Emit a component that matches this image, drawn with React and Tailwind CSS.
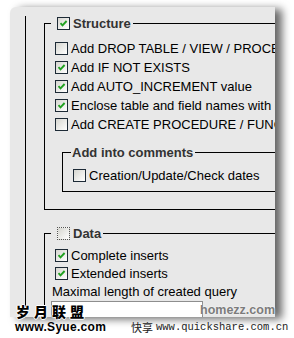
import React from 'react';

const font = { fontFamily: '"Liberation Sans", Arial, sans-serif' };

function Box({ checked, dotted }) {
    return (
        <span
            className={`relative inline-block w-[13px] h-[13px] shrink-0 border ${dotted ? 'border-dotted border-[#555]' : 'border-[#1d2a36]'} bg-linear-to-br from-[#d6d6d0] to-white`}
        >
            {checked && (
                <svg className="absolute left-0 top-0" width="11" height="11" viewBox="0 0 11 11">
                    <path d="M2.5 5.2 L4.5 7.3 L8.6 3" fill="none" stroke="#21a121" strokeWidth="1.9" />
                </svg>
            )}
        </span>
    );
}

function Row({ checked, children, h = 'h-[19px]' }) {
    return (
        <div className={`flex items-center ${h} whitespace-nowrap`}>
            <span className="ml-[4px] flex"><Box checked={checked} /></span>
            <span className="ml-[3px] leading-none">{children}</span>
        </div>
    );
}

export default function App() {
    return (
        <div className="relative w-[294px] h-[338px] bg-white overflow-hidden text-[13px] text-black" style={font}>
            <div className="pt-[7px] pl-[10px]">
                {/* grey panel */}
                <div className="relative w-[265px] h-[310px] bg-[#e8e8e8] overflow-hidden rounded-tl-[6px] shadow-[7px_2px_9px_rgba(0,0,0,0.6)]">
                    <div className="ml-[15px] mt-[3px] w-[300px] h-[306px] border-l border-black">
                        {/* Structure */}
                        <fieldset className="ml-[18px] mt-[9px] w-[262px] min-w-0 border border-black">
                            <legend className="ml-[6px] flex items-center h-[14px] pr-[2px]">
                                <span className="ml-[6px] flex"><Box checked /></span>
                                <span className="ml-[3px] font-bold text-[#333] leading-none">Structure</span>
                            </legend>
                            <div className="pl-[6px] pt-[9px] pb-[17px]">
                                <Row>Add DROP TABLE / VIEW / PROCEDURE / FUNCTION / EVENT</Row>
                                <Row checked>Add IF NOT EXISTS</Row>
                                <Row checked>Add AUTO_INCREMENT value</Row>
                                <Row checked>Enclose table and field names with backquotes</Row>
                                <Row>Add CREATE PROCEDURE / FUNCTION / EVENT statement</Row>
                                <fieldset className="ml-[11px] mt-[11px] w-[240px] min-w-0 border border-black">
                                    <legend className="ml-[8px] h-[14px] pl-[1px] pr-[2px] flex items-center font-bold text-[#333]">
                                        <span className="leading-none">Add into comments</span>
                                    </legend>
                                    <div className="pl-[6px] pt-[7px] pb-[6px]">
                                        <Row>Creation/Update/Check dates</Row>
                                    </div>
                                </fieldset>
                            </div>
                        </fieldset>

                        {/* Data */}
                        <fieldset className="ml-[18px] mt-[16px] w-[262px] min-w-0 border border-black">
                            <legend className="ml-[6px] flex items-center h-[14px] pr-[2px]">
                                <span className="ml-[6px] flex"><Box dotted /></span>
                                <span className="ml-[3px] font-bold text-[#333] leading-none">Data</span>
                            </legend>
                            <div className="pl-[6px] pt-[6px]">
                                <Row checked h="h-[18.5px]">Complete inserts</Row>
                                <Row checked h="h-[18.5px]">Extended inserts</Row>
                                <div className="pl-[1px] leading-[18px] whitespace-nowrap">Maximal length of created query</div>
                                <div className="w-[152px] h-[20px] bg-white border border-[#8e8e8e]" />
                            </div>
                        </fieldset>
                    </div>
                </div>
            </div>

            {/* watermarks */}
            <div
                className="absolute left-[200px] top-[301px] text-[12.5px] font-bold text-[#7c7c7c] [text-shadow:0_0_2px_#fff]"
            >
                homezz.com
            </div>
            <div
                className="absolute left-[16px] top-[302px] text-[14px] font-black tracking-[4px] leading-[18px] [text-shadow:1px_0_0_#fff,-1px_0_0_#fff,0_1px_0_#fff,0_-1px_0_#fff]"
                style={{ fontFamily: '"Noto Sans CJK SC", sans-serif' }}
            >
                岁月联盟
            </div>
            <div className="absolute left-[15px] top-[321px] text-[12px] font-bold tracking-[0.3px] leading-[13px] text-black [text-shadow:0_0_1px_#fff]">
                www.Syue.com
            </div>
            <div className="absolute left-[131px] top-[321px] flex items-center leading-[13px] text-[#222]">
                <span className="text-[11px]" style={{ fontFamily: '"Noto Sans CJK SC", sans-serif' }}>快享</span>
                <span className="ml-[3px] text-[10.5px]" style={{ fontFamily: '"Liberation Mono", monospace' }}>www.quickshare.com.cn</span>
            </div>
        </div>
    );
}
